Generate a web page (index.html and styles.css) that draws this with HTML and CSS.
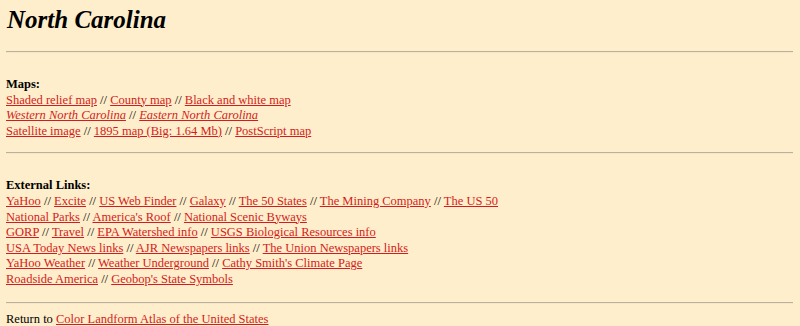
FILE: index.html
```html
<!DOCTYPE html>
<html lang="en">
<head>
    <meta charset="UTF-8">
    <title>North Carolina</title>
    <link rel="stylesheet" href="styles.css">
</head>
<body>

<h1>North Carolina</h1>

<hr class="rule-top">

<p class="section">
    <b>Maps:</b><br>
    <a href="#">Shaded relief map</a> // <a href="#">County map</a> // <a href="#">Black and white map</a><br>
    <a href="#"><i>Western North Carolina</i></a> // <a href="#"><i>Eastern North Carolina</i></a><br>
    <a href="#">Satellite image</a> // <a href="#">1895 map (Big: 1.64 Mb)</a> // <a href="#">PostScript map</a>
</p>

<hr class="rule-mid">

<p class="section">
    <b>External Links:</b><br>
    <a href="#">YaHoo</a> // <a href="#">Excite</a> // <a href="#">US Web Finder</a> // <a href="#">Galaxy</a> // <a href="#">The 50 States</a> // <a href="#">The Mining Company</a> // <a href="#">The US 50</a><br>
    <a href="#">National Parks</a> // <a href="#">America's Roof</a> // <a href="#">National Scenic Byways</a><br>
    <a href="#">GORP</a> // <a href="#">Travel</a> // <a href="#">EPA Watershed info</a> // <a href="#">USGS Biological Resources info</a><br>
    <a href="#">USA Today News links</a> // <a href="#">AJR Newspapers links</a> // <a href="#">The Union Newspapers links</a><br>
    <a href="#">YaHoo Weather</a> // <a href="#">Weather Underground</a> // <a href="#">Cathy Smith's Climate Page</a><br>
    <a href="#">Roadside America</a> // <a href="#">Geobop's State Symbols</a>
</p>

<hr class="rule-bottom">

<p class="return">Return to <a href="#">Color Landform Atlas of the United States</a></p>

</body>
</html>
```

FILE: styles.css
```css
body {
    margin: 0 7px 0 6px;
    background-color: #feeecb;
    color: #000;
    font-family: "Liberation Serif", "Times New Roman", serif;
    font-size: 12.5px;
    line-height: 15.6px;
}

h1 {
    margin: 5px 0 0 1px;
    font-size: 25px;
    line-height: 29px;
    font-style: italic;
    font-weight: bold;
}

a {
    color: #d41c1c;
}

hr {
    height: 0;
    margin: 0;
    border: none;
    border-top: 1px solid #b9b19b;
    border-bottom: 1px solid #f4e6c6;
}

.rule-top {
    margin-top: 17px;
}

.rule-mid {
    margin-top: 13px;
}

.rule-bottom {
    margin-top: 14px;
}

.section {
    margin: 24px 0 0;
}

.return {
    margin: 8px 0 0;
}
```
